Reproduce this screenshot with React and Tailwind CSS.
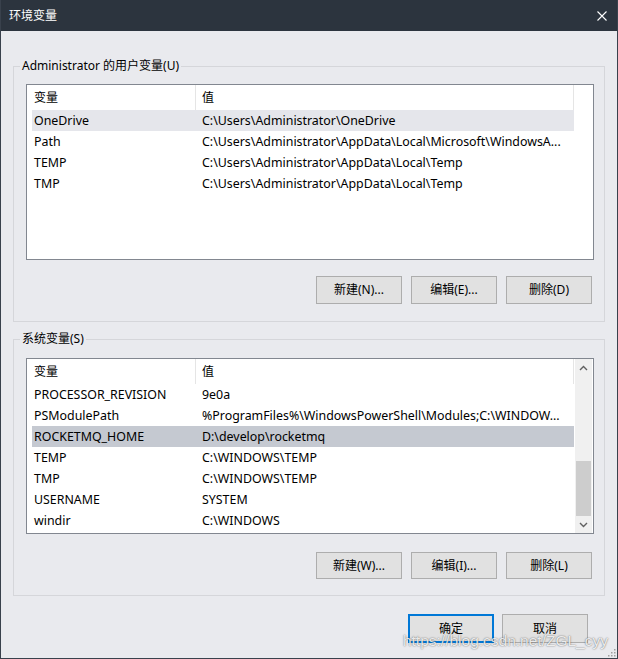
import React from "react";

const userRows = [
  ["OneDrive", "C:\\Users\\Administrator\\OneDrive", "light"],
  ["Path", "C:\\Users\\Administrator\\AppData\\Local\\Microsoft\\WindowsA...", ""],
  ["TEMP", "C:\\Users\\Administrator\\AppData\\Local\\Temp", ""],
  ["TMP", "C:\\Users\\Administrator\\AppData\\Local\\Temp", ""],
];

const sysRows = [
  ["PROCESSOR_REVISION", "9e0a", ""],
  ["PSModulePath", "%ProgramFiles%\\WindowsPowerShell\\Modules;C:\\WINDOW...", ""],
  ["ROCKETMQ_HOME", "D:\\develop\\rocketmq", "dark"],
  ["TEMP", "C:\\WINDOWS\\TEMP", ""],
  ["TMP", "C:\\WINDOWS\\TEMP", ""],
  ["USERNAME", "SYSTEM", ""],
  ["windir", "C:\\WINDOWS", ""],
];

function Chevron({ up }) {
  return (
    <svg width="9" height="6" viewBox="0 0 9 6">
      <polyline
        points={up ? "1,5 4.5,1.5 8,5" : "1,1 4.5,4.5 8,1"}
        fill="none"
        stroke="#606060"
        strokeWidth="1.4"
      />
    </svg>
  );
}

function ListBox({ rows, scrollbar }) {
  return (
    <div className="h-[176px] bg-white border border-[#828790] flex">
      <div className="pl-[5px] flex-1 flex flex-col overflow-hidden">
        <div className="w-[542px] h-[25px] flex shrink-0">
          <div className="w-[164px] pl-[2px] flex items-center border-r border-[#e5e5e5]">变量</div>
          <div className="flex-1 pl-[6px] flex items-center border-r border-[#e5e5e5]">值</div>
        </div>
        {rows.map(([k, v, sel]) => (
          <div
            key={k + v}
            className={
              "w-[542px] h-[21px] flex items-center shrink-0 text-[12.4px] " +
              (sel === "light" ? "bg-[#e5e6eb]" : sel === "dark" ? "bg-[#c5c9d1]" : "")
            }
          >
            <div className="w-[164px] pl-[2px] whitespace-nowrap overflow-hidden">{k}</div>
            <div className="flex-1 pl-[6px] whitespace-nowrap overflow-hidden">{v}</div>
          </div>
        ))}
      </div>
      {scrollbar ? (
        <div className="w-[17px] bg-[#f0f0f0] flex flex-col mr-[1px]">
          <div className="h-[17px] flex items-center justify-center">
            <Chevron up />
          </div>
          <div className="flex-1 flex flex-col justify-end">
            <div className="h-[55px] mx-[1px] bg-[#cdcdcd]" />
          </div>
          <div className="h-[17px] flex items-center justify-center">
            <Chevron />
          </div>
        </div>
      ) : (
        <div className="w-[18px]" />
      )}
    </div>
  );
}

function Btn({ children, primary }) {
  return (
    <div
      className={
        "w-[86px] h-full flex items-center justify-center bg-[#e1e1e1] " +
        (primary ? "border-2 border-[#0078d7]" : "border border-[#adadad]")
      }
    >
      {children}
    </div>
  );
}

export default function App() {
  return (
    <div className="w-[618px] h-[659px] bg-[#e9eaee] border border-t-0 border-[#39414c] flex flex-col relative font-['Noto_Sans','Noto_Sans_CJK_SC',sans-serif] text-[12px] text-black leading-[16px]">
      <div className="h-[31px] bg-[#2c343e] flex items-center justify-between pl-[8px] pr-[10px] text-white shrink-0">
        <span>环境变量</span>
        <svg width="10" height="10" viewBox="0 0 10 10">
          <path d="M0.5 0.5 L9.5 9.5 M9.5 0.5 L0.5 9.5" stroke="#ffffff" strokeWidth="1.1" fill="none" />
        </svg>
      </div>
      <div className="px-[12px] flex flex-col">
        <fieldset className="mt-[27px] border border-[#d5d6da] px-0 pt-[10px] pb-[17px]">
          <legend className="ml-[6px] px-[2px] leading-[16px]">Administrator 的用户变量(U)</legend>
          <div className="pl-[12px] pr-[10px]">
            <ListBox rows={userRows} />
            <div className="mt-[16px] h-[28px] flex justify-end gap-[9px] pr-[2px]">
              <Btn>新建(N)...</Btn>
              <Btn>编辑(E)...</Btn>
              <Btn>删除(D)</Btn>
            </div>
          </div>
        </fieldset>
        <fieldset className="mt-[9px] border border-[#d5d6da] px-0 pt-[11px] pb-[16px]">
          <legend className="ml-[6px] px-[2px] leading-[16px]">系统变量(S)</legend>
          <div className="pl-[12px] pr-[10px]">
            <ListBox rows={sysRows} scrollbar />
            <div className="mt-[18px] h-[27px] flex justify-end gap-[9px] pr-[2px]">
              <Btn>新建(W)...</Btn>
              <Btn>编辑(I)...</Btn>
              <Btn>删除(L)</Btn>
            </div>
          </div>
        </fieldset>
        <div className="mt-[18px] h-[29px] flex justify-end gap-[8px] pr-[17px]">
          <Btn primary>确定</Btn>
          <Btn>取消</Btn>
        </div>
      </div>
      <div className="absolute right-[9px] bottom-[9px] font-['Liberation_Sans',sans-serif] text-[15.5px] leading-[16px] text-white/85 [text-shadow:0_0_1.5px_rgba(0,0,0,0.7)] whitespace-nowrap">
        https://blog.csdn.net/ZGL_cyy
      </div>
      <svg className="absolute right-[1px] bottom-[1px]" width="9" height="9" viewBox="0 0 9 9">
        <rect x="7" y="1" width="1.5" height="1.5" fill="#a0a0a0" />
        <rect x="4" y="4" width="1.5" height="1.5" fill="#a0a0a0" />
        <rect x="7" y="4" width="1.5" height="1.5" fill="#a0a0a0" />
        <rect x="1" y="7" width="1.5" height="1.5" fill="#a0a0a0" />
        <rect x="4" y="7" width="1.5" height="1.5" fill="#a0a0a0" />
        <rect x="7" y="7" width="1.5" height="1.5" fill="#a0a0a0" />
      </svg>
    </div>
  );
}
